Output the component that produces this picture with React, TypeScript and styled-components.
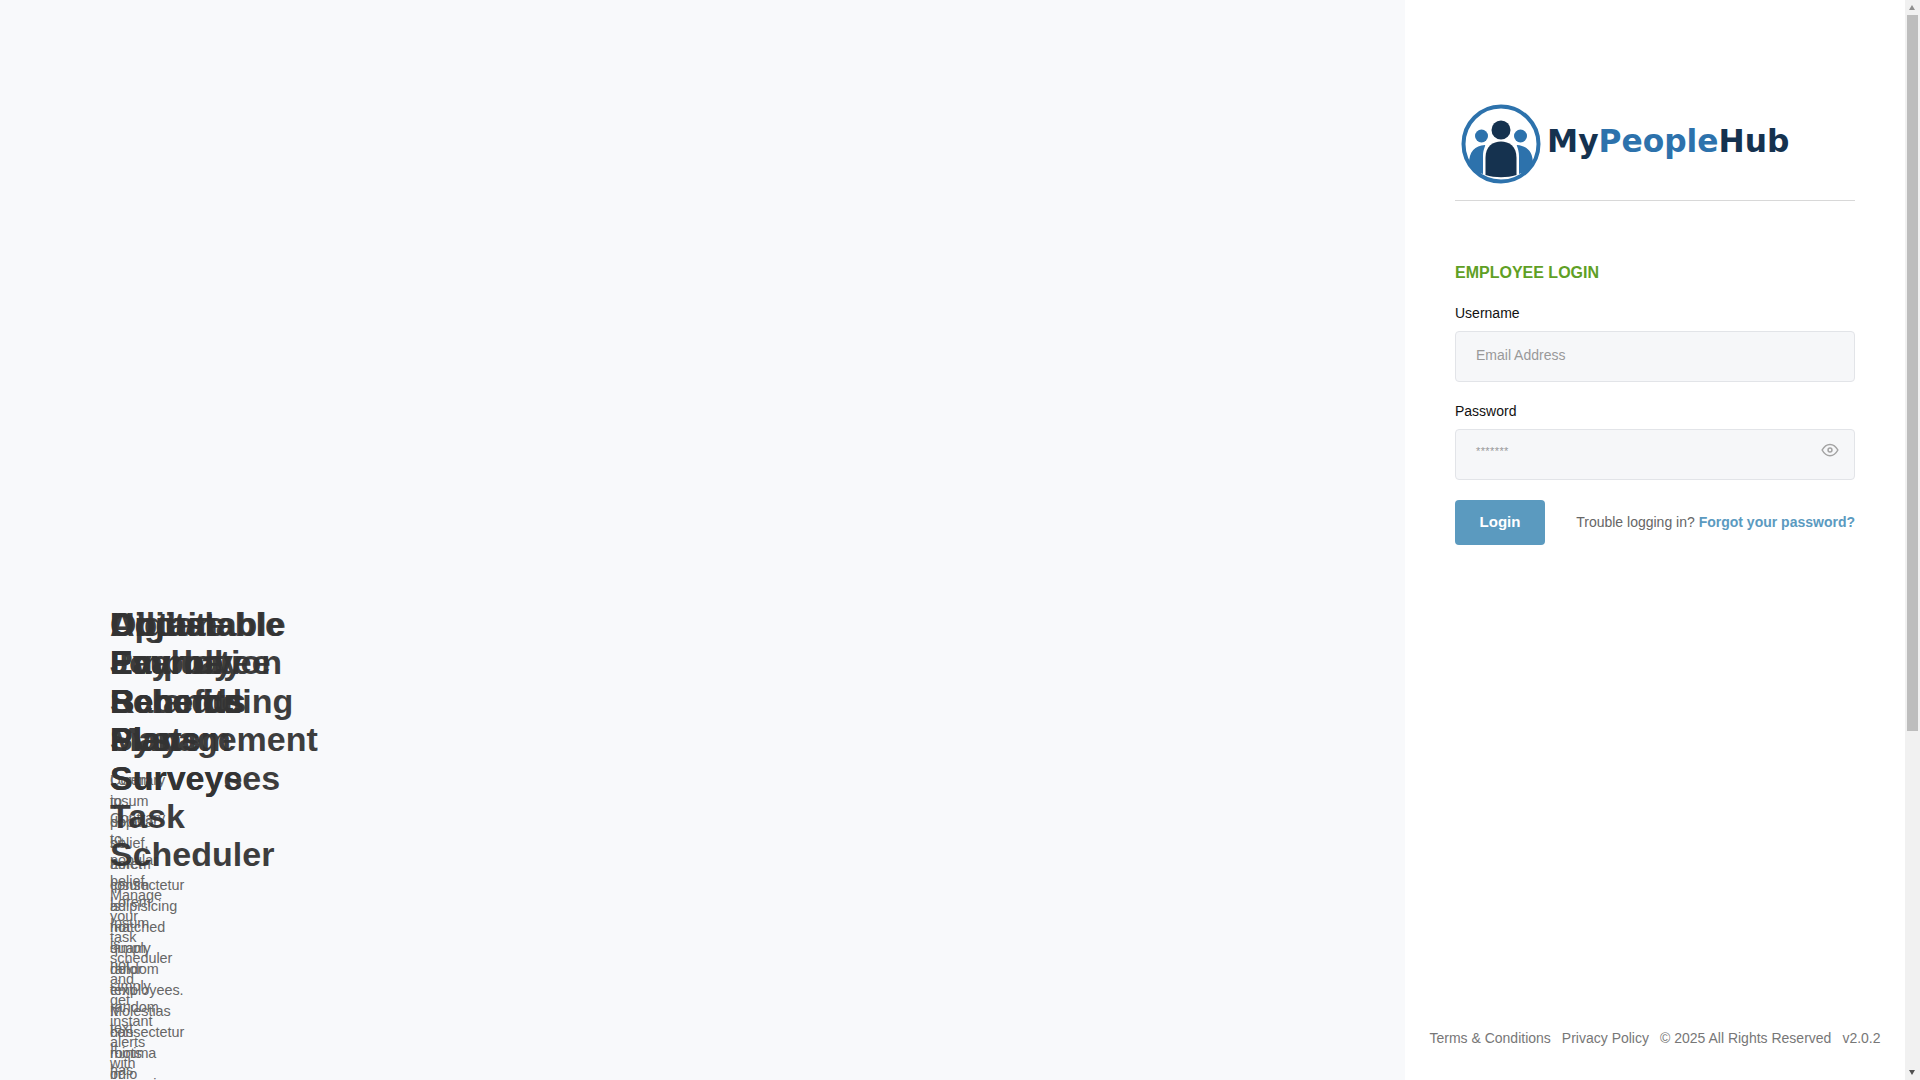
import styled, { createGlobalStyle } from 'styled-components';

const GlobalStyle = createGlobalStyle`
  html, body {
    margin: 0;
    height: 100%;
    overflow: hidden;
    font-family: "Liberation Sans", Arial, sans-serif;
  }
  #root {
    height: 100%;
  }
`;

const Page = styled.div`
  display: flex;
  height: 100vh;
  overflow: hidden;
  background-color: #f8f9fb;
`;

const Hero = styled.section`
  flex: 1;
  padding: 605px 0 0 110px;
  overflow: hidden;
`;

const SlideStack = styled.div`
  display: grid;
  width: 0;
`;

const Slide = styled.article`
  grid-area: 1 / 1;
  width: 0;
`;

const SlideTitle = styled.h2`
  margin: 0 0 11px;
  font-size: 34px;
  line-height: 38.4px;
  font-weight: 700;
  color: #333;
  opacity: 0.95;
`;

const SlideText = styled.p`
  margin: 0;
  font-size: 14.4px;
  line-height: 21px;
  color: #666;
`;

const Panel = styled.aside`
  width: 500px;
  box-sizing: border-box;
  padding: 0 50px;
  display: flex;
  flex-direction: column;
  background-color: #fff;
`;

const LogoRow = styled.div`
  display: flex;
  align-items: flex-end;
  gap: 6px;
  height: 201px;
  padding: 0 0 16px 6px;
  box-sizing: border-box;
  border-bottom: 1px solid #d8d8d8;
  margin-bottom: 62px;
`;

const LogoText = styled.div`
  font-family: "DejaVu Sans", sans-serif;
  font-size: 31.3px;
  line-height: 36px;
  font-weight: 700;
  margin-bottom: 25px;
  color: #15324f;
`;

const LogoAccent = styled.span`
  color: #2d72ac;
`;

const LoginTitle = styled.h1`
  margin: 0 0 21px;
  font-size: 16px;
  line-height: 20px;
  font-weight: 700;
  color: #5fa025;
`;

const FieldLabel = styled.label`
  display: block;
  margin-bottom: 9px;
  font-size: 14px;
  line-height: 18px;
  color: #111;
`;

const FieldBox = styled.div`
  position: relative;
  height: 51px;
  margin-bottom: 20px;
  box-sizing: border-box;
  padding: 0 20px;
  background-color: #f6f7f9;
  border: 1px solid #e2e4e8;
  border-radius: 4px;
  display: flex;
  align-items: center;
`;

const Placeholder = styled.span`
  font-size: 14px;
  color: #999;
  margin-top: -3px;
`;

const PasswordMask = styled.span`
  font-size: 11px;
  letter-spacing: 0.4px;
  color: #999;
  margin-top: -7px;
`;

const EyeButton = styled.span`
  position: absolute;
  right: 15px;
  top: 11px;
  color: #a3a3a3;
  line-height: 0;
`;

const ActionRow = styled.div`
  display: flex;
  align-items: center;
  justify-content: space-between;
`;

const LoginButton = styled.button`
  width: 90px;
  height: 45px;
  padding: 0 0 2px;
  border: none;
  border-radius: 4px;
  background-color: #5b9abf;
  color: #fff;
  font-family: inherit;
  font-size: 15px;
  font-weight: 700;
`;

const Trouble = styled.div`
  font-size: 14px;
  color: #666;
  margin-bottom: 2px;
`;

const ForgotLink = styled.a`
  font-weight: 700;
  color: #5b9ac0;
`;

const Footer = styled.footer`
  margin: auto -30px 33px;
  display: flex;
  justify-content: center;
  gap: 11px;
  white-space: nowrap;
  font-size: 14px;
  line-height: 18px;
  color: #777;
`;

const ScrollTrack = styled.div`
  width: 15px;
  flex-shrink: 0;
  position: relative;
  background-color: #f1f1f1;
`;

const ScrollThumb = styled.div`
  position: absolute;
  top: 15px;
  left: 2px;
  right: 2px;
  height: 716px;
  background-color: #bdbdbd;
`;

const ScrollArrow = styled.div<{ $up?: boolean }>`
  position: absolute;
  left: 4px;
  ${({ $up }) => ($up ? 'top: 5px;' : 'bottom: 5px;')}
  width: 0;
  height: 0;
  border-left: 3.5px solid transparent;
  border-right: 3.5px solid transparent;
  ${({ $up }) => ($up ? 'border-bottom: 5px solid #8f8f8f;' : 'border-top: 5px solid #505050;')}
`;

const contraryText = 'Contrary to popular belief, Lorem Ipsum is not simply random text. It has roots in a piece';

const slides = [
  {
    title: 'Obtainable Evaluation Scheduling Management Surveyees Task Scheduler',
    text: 'Manage your task scheduler and get instant alerts with upcoming schedules',
  },
  {
    title: 'Adjustable Employee Records Play Surveys',
    text: contraryText,
  },
  {
    title: 'Update Journey Balance System',
    text: contraryText,
  },
  {
    title: 'Digital Payroll Benefits Plans',
    text: 'Lorem ipsum dolor sit amet consectetur adipisicing matched quam dolor employees. Molestias consectetur minima odio',
  },
];

const LogoMark = () => (
  <svg width="80" height="80" viewBox="0 0 80 80">
    <circle cx="40" cy="40" r="37.5" fill="#fff" stroke="#2d72ac" strokeWidth="4" />
    <circle cx="20.5" cy="32" r="6.5" fill="#2d72ac" />
    <circle cx="59.5" cy="32" r="6.5" fill="#2d72ac" />
    <path d="M8 60 C8 47 14 42 24 41 C25 41 22 45 22 52 V70 C15 68 10 65 8 60 Z" fill="#2d72ac" />
    <path d="M72 60 C72 47 66 42 56 41 C55 41 58 45 58 52 V70 C65 68 70 65 72 60 Z" fill="#2d72ac" />
    <circle cx="40" cy="26" r="9.5" fill="#15324f" />
    <path d="M24.5 71 V54 C24.5 42 32 37.5 40 37.5 C48 37.5 55.5 42 55.5 54 V71 C46 74 34 74 24.5 71 Z" fill="#15324f" />
  </svg>
);

const EyeIcon = () => (
  <svg width="18" height="18" viewBox="0 0 24 24" fill="none" stroke="currentColor" strokeWidth="2">
    <path d="M1.5 12 C4.5 6.5 8 4.5 12 4.5 C16 4.5 19.5 6.5 22.5 12 C19.5 17.5 16 19.5 12 19.5 C8 19.5 4.5 17.5 1.5 12 Z" />
    <circle cx="12" cy="12" r="2.6" />
  </svg>
);

const App = () => {
  return (
    <>
      <GlobalStyle />
      <Page>
        <Hero>
          <SlideStack>
            {slides.map((slide) => (
              <Slide key={slide.title}>
                <SlideTitle>{slide.title}</SlideTitle>
                <SlideText>{slide.text}</SlideText>
              </Slide>
            ))}
          </SlideStack>
        </Hero>
        <Panel>
          <LogoRow>
            <LogoMark />
            <LogoText>
              My<LogoAccent>People</LogoAccent>Hub
            </LogoText>
          </LogoRow>
          <LoginTitle>EMPLOYEE LOGIN</LoginTitle>
          <FieldLabel>Username</FieldLabel>
          <FieldBox>
            <Placeholder>Email Address</Placeholder>
          </FieldBox>
          <FieldLabel>Password</FieldLabel>
          <FieldBox>
            <PasswordMask>*******</PasswordMask>
            <EyeButton>
              <EyeIcon />
            </EyeButton>
          </FieldBox>
          <ActionRow>
            <LoginButton>Login</LoginButton>
            <Trouble>
              Trouble logging in? <ForgotLink>Forgot your password?</ForgotLink>
            </Trouble>
          </ActionRow>
          <Footer>
            <span>Terms &amp; Conditions</span>
            <span>Privacy Policy</span>
            <span>© 2025 All Rights Reserved</span>
            <span>v2.0.2</span>
          </Footer>
        </Panel>
        <ScrollTrack>
          <ScrollArrow $up />
          <ScrollThumb />
          <ScrollArrow />
        </ScrollTrack>
      </Page>
    </>
  );
};

export default App;
